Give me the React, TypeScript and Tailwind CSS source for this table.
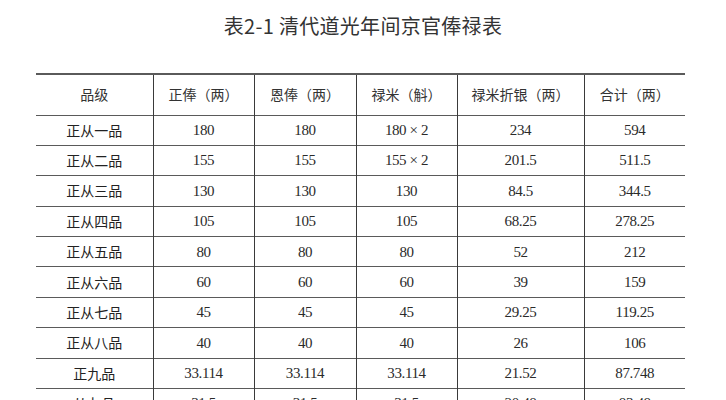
const HEADERS = ["品级", "正俸（两）", "恩俸（两）", "禄米（斛）", "禄米折银（两）", "合计（两）"];

const ROWS: string[][] = [
  ["正从一品", "180", "180", "180 × 2", "234", "594"],
  ["正从二品", "155", "155", "155 × 2", "201.5", "511.5"],
  ["正从三品", "130", "130", "130", "84.5", "344.5"],
  ["正从四品", "105", "105", "105", "68.25", "278.25"],
  ["正从五品", "80", "80", "80", "52", "212"],
  ["正从六品", "60", "60", "60", "39", "159"],
  ["正从七品", "45", "45", "45", "29.25", "119.25"],
  ["正从八品", "40", "40", "40", "26", "106"],
  ["正九品", "33.114", "33.114", "33.114", "21.52", "87.748"],
  ["从九品", "31.5", "31.5", "31.5", "20.48", "83.48"],
];

const WIDTHS = [117, 101, 102, 101, 127, 101];

const sans = "font-['Noto_Sans_CJK_SC','Noto_Sans',sans-serif]";
const serif = "font-['Liberation_Serif','Noto_Sans_CJK_SC',serif]";

export default function App() {
  return (
    <div className="w-[726px] h-[400px] overflow-hidden bg-white text-[#2a2a2a]">
      <h1 className={`${sans} text-center text-[20px] leading-[28px] pt-[12px] pb-[33px] text-[#333] tracking-[0.3px]`}>
        表2-1 清代道光年间京官俸禄表
      </h1>
      <div className="pl-[36px]">
        <table className="table-fixed border-collapse w-[649px]">
          <colgroup>
            {WIDTHS.map((w, i) => (
              <col key={i} style={{ width: w }} />
            ))}
          </colgroup>
          <thead>
            <tr className="h-[41px] border-t-2 border-b border-[#5a5a5a]">
              {HEADERS.map((h, i) => (
                <th
                  key={h}
                  className={`${sans} font-normal text-[14px] text-[#333] text-center ${i > 0 ? "border-l border-[#3a3a3a]" : ""}`}
                >
                  {h}
                </th>
              ))}
            </tr>
          </thead>
          <tbody>
            {ROWS.map((r) => (
              <tr key={r[0]} className="h-[30.4px] border-b border-[#5a5a5a]">
                {r.map((c, i) => (
                  <td
                    key={i}
                    className={
                      i === 0
                        ? `${sans} text-[14px] font-normal text-center text-[#222]`
                        : `${serif} text-[15px] tracking-[-0.4px] text-center text-[#2a2a2a] border-l border-[#3a3a3a]`
                    }
                  >
                    {c}
                  </td>
                ))}
              </tr>
            ))}
          </tbody>
        </table>
      </div>
    </div>
  );
}
